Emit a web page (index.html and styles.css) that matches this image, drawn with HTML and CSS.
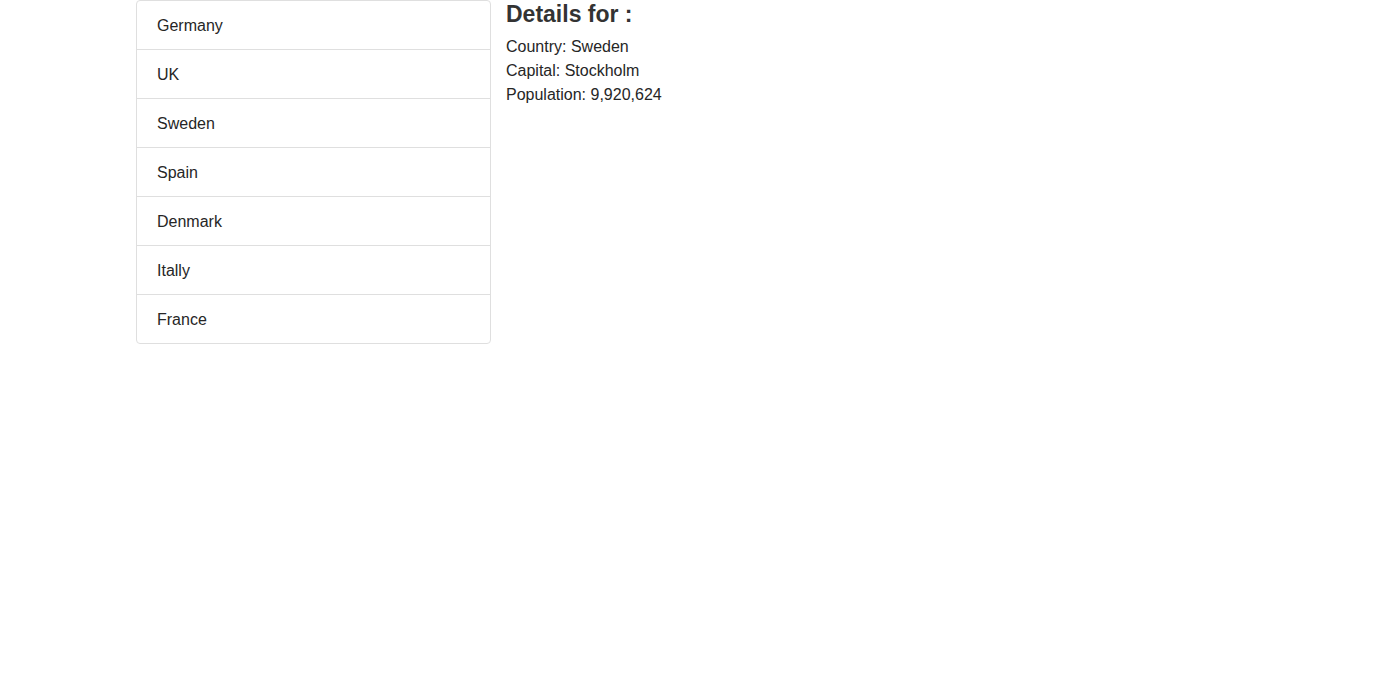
FILE: index.html
```html
<!DOCTYPE html>
<html>
<head>
<meta charset="utf-8">
<title>Countries</title>
<link rel="stylesheet" href="styles.css">
</head>
<body>
<div class="page">
  <ul class="list-group">
    <li class="list-item">Germany</li>
    <li class="list-item">UK</li>
    <li class="list-item">Sweden</li>
    <li class="list-item">Spain</li>
    <li class="list-item">Denmark</li>
    <li class="list-item">Itally</li>
    <li class="list-item">France</li>
  </ul>
  <div class="details">
    <h4 class="details-title">Details for :</h4>
    <div class="details-line">Country: Sweden</div>
    <div class="details-line">Capital: Stockholm</div>
    <div class="details-line">Population: 9,920,624</div>
  </div>
</div>
</body>
</html>
```

FILE: styles.css
```css
html, body {
  margin: 0;
  padding: 0;
  background: #fff;
}
body {
  font-family: "Liberation Sans", Arial, sans-serif;
  font-size: 16px;
  line-height: 24px;
  color: #262626;
}
.page {
  display: flex;
  align-items: flex-start;
  gap: 15px;
  padding-left: 136px;
}
.list-group {
  list-style: none;
  margin: 0;
  padding: 0;
  width: 355px;
  flex: none;
  display: flex;
  flex-direction: column;
}
.list-item {
  padding: 13px 20px 11px 20px;
  border: 1px solid #dfdfdf;
  margin-bottom: -1px;
}
.list-item:first-child {
  border-top-left-radius: 4px;
  border-top-right-radius: 4px;
}
.list-item:last-child {
  margin-bottom: 0;
  border-bottom-left-radius: 4px;
  border-bottom-right-radius: 4px;
}
.details-title {
  margin: 0 0 6px 0;
  font-size: 23px;
  line-height: 29px;
  font-weight: bold;
  color: #333;
}
```
